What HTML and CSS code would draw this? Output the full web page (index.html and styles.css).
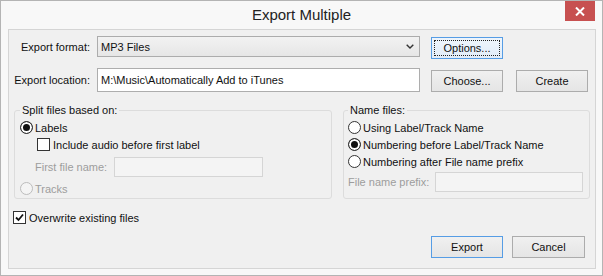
FILE: index.html
```html
<!DOCTYPE html>
<html lang="en">
<head>
  <meta charset="UTF-8" />
  <title>Export Multiple</title>
  <link rel="stylesheet" href="styles.css">
</head>
<body>
  <div class="window">
    <!-- Title bar -->
    <div class="titlebar">
      <span></span>
      <span class="title">Export Multiple</span>
      <span class="close">
        <svg width="10" height="9" viewBox="0 0 10 9"><path d="M1 0.5 L9 8.5 M9 0.5 L1 8.5" stroke="#fff" stroke-width="2" /></svg>
      </span>
    </div>

    <div class="client">
      <!-- Format / location -->
      <div class="top-grid">
        <span class="lbl">Export format:</span>
        <div class="combo">
          <span>MP3 Files</span>
          <svg width="8" height="5" viewBox="0 0 8 5"><polyline points="0.7,0.7 4,4 7.3,0.7" fill="none" stroke="#333" stroke-width="1.4" /></svg>
        </div>
        <button class="btn focused btn-top">Options...</button>
        <span></span>

        <span class="lbl">Export location:</span>
        <div class="textbox">M:\Music\Automatically Add to iTunes</div>
        <button class="btn btn-low">Choose...</button>
        <button class="btn btn-low">Create</button>
      </div>

      <!-- Group boxes -->
      <div class="groups">
        <fieldset class="group group-split">
          <legend>Split files based on:</legend>
          <div class="opt"><span class="radio on"></span>Labels</div>
          <div class="opt indent"><span class="check"></span>Include audio before first label</div>
          <div class="field-row first-name">
            <span class="field-lbl">First file name:</span>
            <span class="textbox off"></span>
          </div>
          <div class="opt disabled tracks"><span class="radio off"></span>Tracks</div>
        </fieldset>

        <fieldset class="group group-name">
          <legend>Name files:</legend>
          <div class="opt"><span class="radio"></span>Using Label/Track Name</div>
          <div class="opt"><span class="radio on"></span>Numbering before Label/Track Name</div>
          <div class="opt"><span class="radio"></span>Numbering after File name prefix</div>
          <div class="field-row prefix">
            <span class="field-lbl">File name prefix:</span>
            <span class="textbox off"></span>
          </div>
        </fieldset>
      </div>

      <div class="opt overwrite">
        <span class="check">
          <svg width="9" height="9" viewBox="0 0 9 9"><path d="M1 4.5 L3.5 7 L8 1.5" fill="none" stroke="#111" stroke-width="1.8" /></svg>
        </span>Overwrite existing files
      </div>

      <div class="actions">
        <button class="btn default">Export</button>
        <button class="btn cancel">Cancel</button>
      </div>
    </div>
  </div>
</body>
</html>
```

FILE: styles.css
```css
body {
  margin: 0;
  font-family: "Liberation Sans", Arial, sans-serif;
  font-size: 11px;
  color: #111;
  background: #fff;
}
.window {
  width: 603px;
  height: 276px;
  box-sizing: border-box;
  border: 1px solid #b4b4b4;
  background: #f8f8f8;
  display: flex;
  flex-direction: column;
}

/* title bar */
.titlebar {
  height: 28px;
  display: grid;
  grid-template-columns: 1fr auto 1fr;
}
.title {
  font-size: 15px;
  line-height: 28px;
  color: #222;
}
.close {
  justify-self: end;
  width: 30px;
  height: 20px;
  margin-right: 7px;
  background: #c75050;
  display: flex;
  align-items: center;
  justify-content: center;
}

/* client area */
.client {
  flex: 1;
  margin: 0 6px 6px 7px;
  border: 1px solid #d5d5d5;
  background: #f0f0f0;
  padding-top: 6px;
}
.top-grid {
  display: grid;
  grid-template-columns: 88px 334px 85px 72px;
  grid-template-rows: 22px 24px;
  row-gap: 10px;
}
.lbl {
  align-self: center;
  text-align: right;
  padding-right: 7px;
}
.combo {
  width: 323px;
  height: 21px;
  box-sizing: border-box;
  border: 1px solid #acacac;
  background: linear-gradient(#f2f2f2, #e6e6e6);
  display: flex;
  align-items: center;
  justify-content: space-between;
  padding: 0 5px 0 3px;
}
.textbox {
  display: block;
  width: 323px;
  height: 24px;
  box-sizing: border-box;
  border: 1px solid #adadad;
  background: #fff;
  padding-left: 3px;
  line-height: 22px;
}
.textbox.off {
  background: #f4f4f4;
  border-color: #d5d5d5;
  height: 20px;
}

/* buttons */
.btn {
  font: inherit;
  color: #111;
  width: 72px;
  height: 22px;
  box-sizing: border-box;
  border: 1px solid #acacac;
  border-radius: 0;
  background: linear-gradient(#f0f0f0, #e5e5e5);
  padding: 0;
}
.btn-top {
  margin-top: 1px;
}
.btn-low {
  margin-top: 2px;
}
.btn.focused {
  border-color: #569de5;
  background: linear-gradient(#eef5fc, #e2edf9);
  outline: 1px dotted #222;
  outline-offset: -4px;
}
.btn.default {
  border-color: #569de5;
}

/* group boxes */
.groups {
  display: flex;
  gap: 11px;
  margin: 11px 0 0 5px;
}
.group {
  margin: 0;
  border: 1px solid #dcdcdc;
  border-radius: 3px;
  padding: 1px 5px 1px 5px;
  min-width: 0;
  box-sizing: border-box;
}
.group legend {
  padding: 0 2px;
  line-height: 15px;
}
.group-split {
  width: 318px;
}
.group-name {
  width: 247px;
  padding-left: 4px;
}

.opt {
  display: flex;
  align-items: center;
  height: 17px;
}
.opt.indent {
  padding-left: 17px;
}
.disabled {
  color: #9d9d9d;
}
.radio {
  width: 13px;
  height: 13px;
  box-sizing: border-box;
  border: 1px solid #333;
  border-radius: 50%;
  background: #fff;
  margin-right: 2px;
}
.radio.on {
  background: #111;
  box-shadow: inset 0 0 0 2px #fff;
}
.radio.off {
  border-color: #bcbcbc;
  background: #f4f4f4;
}
.check {
  width: 13px;
  height: 13px;
  box-sizing: border-box;
  border: 1px solid #333;
  background: #fff;
  margin-right: 3px;
  display: flex;
  align-items: center;
  justify-content: center;
}

.field-row {
  display: flex;
  align-items: center;
  color: #9d9d9d;
}
.first-name {
  margin-top: 4px;
  padding-left: 15px;
}
.first-name .field-lbl {
  width: 79px;
}
.first-name .textbox {
  width: 149px;
}
.tracks {
  margin-top: 3px;
}
.prefix {
  margin-top: 2px;
}
.prefix .field-lbl {
  width: 87px;
}
.prefix .textbox {
  width: 148px;
}

.overwrite {
  margin-top: 10px;
  padding-left: 4px;
}
.actions {
  display: flex;
  justify-content: flex-end;
  gap: 9px;
  padding-right: 10px;
  margin-top: 10px;
}
.btn.cancel {
  width: 73px;
}
```
